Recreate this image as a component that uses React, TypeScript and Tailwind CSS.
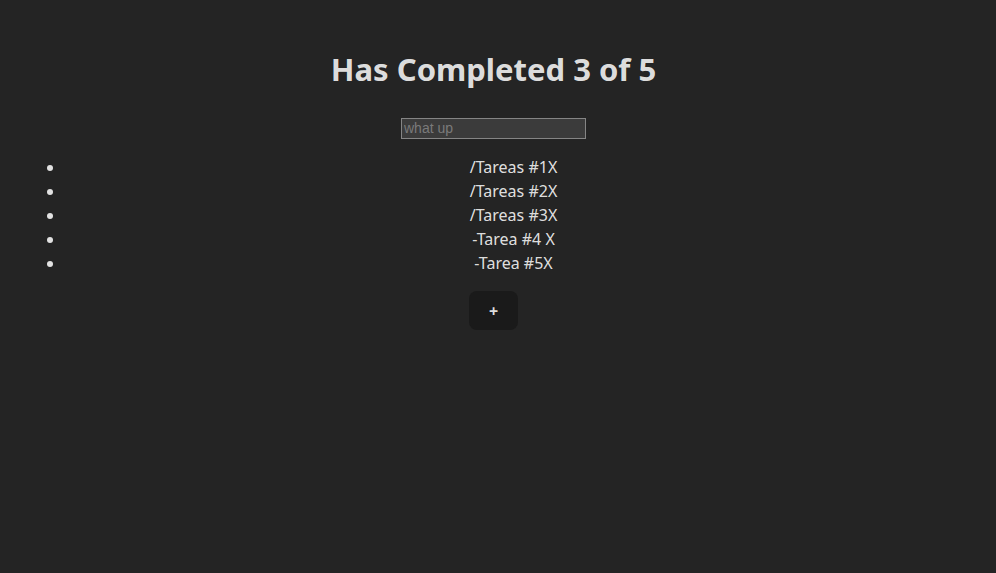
import React from 'react';

const tasks = ['/Tareas #1X', '/Tareas #2X', '/Tareas #3X', '-Tarea #4 X', '-Tarea #5X'];

export default function App() {
  return (
    <div
      className="min-h-[573px] w-full bg-[#242424] text-[rgba(255,255,255,0.87)]"
      style={{ fontFamily: '"Noto Sans", "Open Sans", sans-serif' }}
    >
      <div className="ml-[20px] w-[947px] pt-[52px] text-center">
        <h1 className="text-[31px] font-bold leading-[35px]">Has Completed 3 of 5</h1>
        <div className="mt-[31px] flex justify-center">
          <input
            placeholder="what up"
            className="h-[21px] w-[185px] border border-[#858585] bg-[#3b3b3b] px-[2px] text-[14px] text-white placeholder:text-[#7a7a7a]"
            style={{ fontFamily: '"Liberation Sans", Arial, sans-serif' }}
          />
        </div>
        <ul className="mt-[16px] mr-[5px] list-disc pl-[45px] text-[16px] leading-[24px]">
          {tasks.map((t, i) => (
            <li key={i}>{t}</li>
          ))}
        </ul>
        <div className="mt-[16px] flex justify-center">
          <button className="h-[39px] w-[49px] rounded-[8px] bg-[#1a1a1a] text-[16px] font-bold">+</button>
        </div>
      </div>
    </div>
  );
}
